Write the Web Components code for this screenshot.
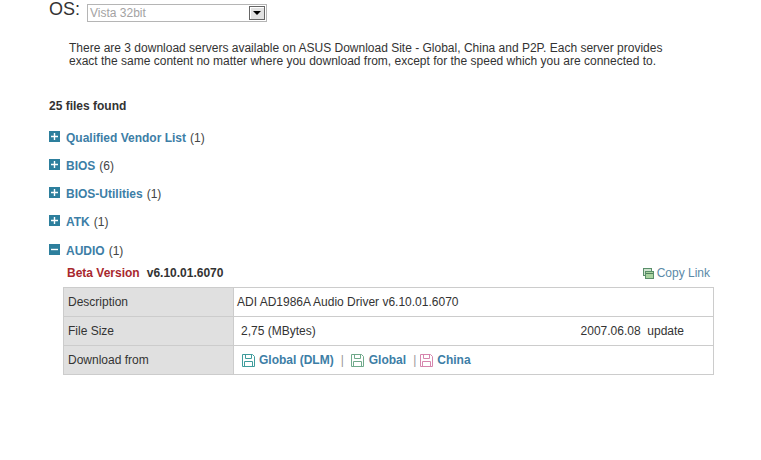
<!DOCTYPE html>
<html>
<head>
<meta charset="utf-8">
<style>
  html, body { margin: 0; padding: 0; background: #fff; }
  body { font-family: "Liberation Sans", Arial, sans-serif; font-size: 12px; color: #333; overflow: hidden; }
</style>
</head>
<body>
<download-page>
  <os-picker slot="os" value="Vista 32bit"></os-picker>
  <p slot="note">There are 3 download servers available on ASUS Download Site - Global, China and P2P. Each server provides<br>exact the same content no matter where you download from, except for the speed which you are connected to.</p>
  <span slot="count">25 files found</span>
  <file-group name="Qualified Vendor List" count="1"></file-group>
  <file-group name="BIOS" count="6"></file-group>
  <file-group name="BIOS-Utilities" count="1"></file-group>
  <file-group name="ATK" count="1"></file-group>
  <file-group class="last" name="AUDIO" count="1" open>
    <driver-detail></driver-detail>
  </file-group>
</download-page>

<script>
class DownloadPage extends HTMLElement {
  constructor() {
    super();
    this.attachShadow({ mode: "open" });
    this.shadowRoot.innerHTML = `
      <style>
        :host { display: block; padding: 0 0 0 49px; }
        .note { padding: 20px 0 0 20px; line-height: 13px; color: #333; }
        ::slotted(p) { margin: 0; }
        .count { margin-top: 31px; font-weight: bold; line-height: 14px; color: #333; }
        .groups { margin-top: 18px; display: flex; flex-direction: column; gap: 14px; }
        ::slotted(.last) { margin-top: 1px; }
      </style>
      <slot name="os"></slot>
      <div class="note"><slot name="note"></slot></div>
      <div class="count"><slot name="count"></slot></div>
      <div class="groups"><slot></slot></div>
    `;
  }
}

class OsPicker extends HTMLElement {
  constructor() {
    super();
    this.attachShadow({ mode: "open" });
  }
  connectedCallback() {
    this.shadowRoot.innerHTML = `
      <style>
        :host { display: flex; align-items: flex-start; gap: 7px; height: 22px; }
        .label { font-size: 18px; color: #333; line-height: 18px; }
        .box { box-sizing: border-box; width: 180px; height: 18px; margin-top: 4px; border: 1px solid #b5b5b5; display: flex; align-items: center; justify-content: space-between; padding: 0 1px 0 2px; font-size: 12px; color: #a3a3a3; }
        .btn { box-sizing: border-box; width: 16px; height: 14px; background: #e2e2e2; border: 1px solid #666; box-shadow: inset 1px 1px 0 #fff; display: flex; align-items: center; justify-content: center; }
        .btn i { width: 0; height: 0; border: 4px solid transparent; border-top: 4px solid #000; border-bottom: 0; }
      </style>
      <span class="label">OS:</span>
      <div class="box"><span>${this.getAttribute("value")}</span><span class="btn"><i></i></span></div>
    `;
  }
}

class FileGroup extends HTMLElement {
  constructor() {
    super();
    this.attachShadow({ mode: "open" });
  }
  connectedCallback() {
    const open = this.hasAttribute("open");
    this.shadowRoot.innerHTML = `
      <style>
        :host { display: block; }
        .head { display: flex; align-items: center; height: 14px; line-height: 14px; }
        svg { display: block; margin-right: 6px; margin-top: -3px; flex: none; }
        b { color: #3d7ea6; font-weight: bold; }
        .n { margin-left: 4px; color: #444; }
      </style>
      <div class="head">
        <svg width="11" height="11" viewBox="0 0 11 11">
          <rect width="11" height="11" fill="#2d7f9d"/>
          <path d="M2 5.5H9${open ? "" : "M5.5 2V9"}" stroke="#fff" stroke-width="1.4"/>
        </svg>
        <b>${this.getAttribute("name")}</b><span class="n">(${this.getAttribute("count")})</span>
      </div>
      <slot></slot>
    `;
  }
}

class SaveIcon extends HTMLElement {
  constructor() {
    super();
    this.attachShadow({ mode: "open" });
  }
  connectedCallback() {
    const c = this.getAttribute("color");
    this.shadowRoot.innerHTML = `
      <style>:host { display: inline-flex; width: 13px; height: 13px; } svg { display: block; }</style>
      <svg width="13" height="13" viewBox="0 0 13 13" fill="none" stroke="${c}" stroke-width="1">
        <path d="M.5 .5H10.5L12.5 2.5V12.5H.5Z"/>
        <path d="M3.5 .5V4.5H9.5V.5"/>
        <path d="M2.5 12.5V7.5H10.5V12.5"/>
      </svg>
    `;
  }
}

class DriverDetail extends HTMLElement {
  constructor() {
    super();
    this.attachShadow({ mode: "open" });
  }
  connectedCallback() {
    this.shadowRoot.innerHTML = `
      <style>
        :host { display: block; margin: 0 0 0 14px; width: 651px; }
        .title { display: flex; align-items: center; justify-content: space-between; height: 14px; line-height: 14px; margin-top: 8px; padding: 0 4px 0 4px; }
        .beta { color: #a8282e; font-weight: bold; }
        .ver { color: #333; font-weight: bold; margin-left: 7px; }
        .copy { display: flex; align-items: center; gap: 3px; color: #5b8aa8; }
        .table { margin-top: 7px; display: grid; grid-template-columns: 169px 1fr; grid-auto-rows: 28px; gap: 1px; background: #ccc; border: 1px solid #ccc; }
        .k { background: #e0e0e0; padding-left: 4px; display: flex; align-items: center; color: #333; }
        .v { background: #fff; display: flex; align-items: center; padding-left: 3px; color: #333; }
        .size { padding-left: 7px; justify-content: space-between; padding-right: 29px; }
        .links { padding-left: 8px; }
        .links a { color: #3d7ea6; font-weight: bold; margin-left: 4px; }
        .links a.wide { margin-left: 5px; }
        .sep { margin: 0 7px; color: #999; }
        .sep.b { margin: 0 4px 0 7px; }
      </style>
      <div class="title">
        <span><span class="beta">Beta Version</span><span class="ver">v6.10.01.6070</span></span>
        <span class="copy">
          <svg width="11" height="11" viewBox="0 0 11 11"><rect x=".5" y=".5" width="8" height="7" fill="#cfe3cf" stroke="#5a8f6a"/><rect x="2.5" y="3.5" width="8" height="7" fill="#a9d3a0" stroke="#5a8f6a"/><path d="M3 5.5H10" stroke="#4f7f5e"/></svg>
          Copy Link
        </span>
      </div>
      <div class="table">
        <div class="k">Description</div><div class="v">ADI AD1986A Audio Driver v6.10.01.6070</div>
        <div class="k">File Size</div><div class="v size"><span>2,75 (MBytes)</span><span>2007.06.08&nbsp; update</span></div>
        <div class="k">Download from</div>
        <div class="v links">
          <save-icon color="#3f9c9c"></save-icon><a>Global (DLM)</a><span class="sep">|</span>
          <save-icon color="#6fa98a"></save-icon><a class="wide">Global</a><span class="sep b">|</span>
          <save-icon color="#d685ad"></save-icon><a>China</a>
        </div>
      </div>
    `;
  }
}

customElements.define("save-icon", SaveIcon);
customElements.define("os-picker", OsPicker);
customElements.define("file-group", FileGroup);
customElements.define("driver-detail", DriverDetail);
customElements.define("download-page", DownloadPage);
</script>
</body>
</html>
